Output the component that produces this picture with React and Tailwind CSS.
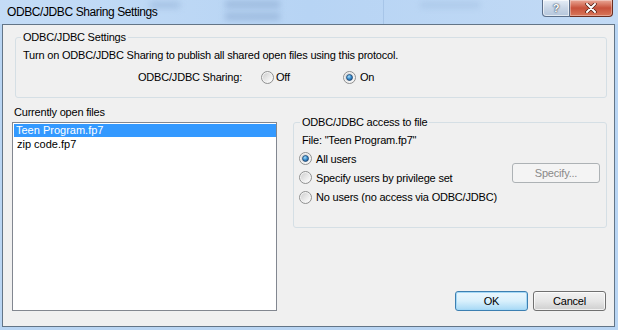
import React from "react";

function Radio({ checked }) {
  return (
    <svg width="13" height="13" viewBox="0 0 13 13" className="shrink-0">
      <defs>
        <linearGradient id="rbg" x1="0" y1="0" x2="1" y2="1">
          <stop offset="0" stopColor="#cfcfcf" />
          <stop offset="0.6" stopColor="#ececec" />
          <stop offset="1" stopColor="#ffffff" />
        </linearGradient>
        <radialGradient id="rdot" cx="0.4" cy="0.35" r="0.7">
          <stop offset="0" stopColor="#a9def9" />
          <stop offset="0.5" stopColor="#3f93d3" />
          <stop offset="1" stopColor="#19508b" />
        </radialGradient>
      </defs>
      <circle cx="6.5" cy="6.5" r="6" fill="#f4f4f4" stroke="#8e8f8f" strokeWidth="1" />
      <circle cx="6.5" cy="6.5" r="4.6" fill="url(#rbg)" />
      {checked && (
        <circle cx="6.5" cy="6.5" r="3" fill="url(#rdot)" stroke="#1b3f66" strokeWidth="0.7" />
      )}
    </svg>
  );
}

export default function App() {
  return (
    <div className="w-[618px] h-[330px] bg-[#b9d5f3] flex flex-col relative overflow-hidden font-['Liberation_Sans',Arial,sans-serif] text-black">
      {/* title bar */}
      <div className="h-[24px] shrink-0 relative flex items-center pl-[7px] bg-gradient-to-r from-[#c4dcf6] via-[#b7d4f4] to-[#c2daf5]">
        <div className="absolute left-[150px] top-[2px] w-[30px] h-[6px] bg-[#98b6da] blur-[3px] opacity-70" />
        <div className="absolute left-[225px] top-[1px] w-[55px] h-[7px] bg-[#90aed4] blur-[3px] opacity-70" />
        <div className="absolute left-[225px] top-[13px] w-[55px] h-[7px] bg-[#90aed4] blur-[3px] opacity-70" />
        <div className="absolute left-[383px] top-0 w-[1px] h-[24px] bg-[#a7c5e8]" />
        <div className="absolute left-[420px] top-[2px] w-[60px] h-[6px] bg-[#a3c0e2] blur-[3px] opacity-60" />
        <span className="relative text-[12px] tracking-[-0.4px] leading-[14px] text-black">ODBC/JDBC Sharing Settings</span>
        <div className="absolute top-0 right-[5px] flex">
          <div className="w-[28px] h-[17px] rounded-bl-[4px] border border-t-0 border-[#5b6f8a] bg-gradient-to-b from-[#e6eef7] via-[#c9d6e6] to-[#b4c6dc] flex items-center justify-center shadow-[inset_0_0_0_1px_rgba(255,255,255,0.6)]">
            <span className="text-[11px] font-bold leading-none text-white [text-shadow:0_0_2px_#2b3b52,0_0_1px_#2b3b52]">?</span>
          </div>
          <div className="w-[43px] h-[17px] rounded-br-[4px] border border-t-0 border-l-0 border-[#6b2d20] bg-gradient-to-b from-[#e9a897] via-[#c7513b] to-[#d8765a] flex items-center justify-center shadow-[inset_0_0_0_1px_rgba(255,255,255,0.35)]">
            <svg width="12" height="10" viewBox="0 0 12 10">
              <path d="M2 1 L10 9 M10 1 L2 9" stroke="#4a1b10" strokeWidth="3.4" strokeLinecap="round" />
              <path d="M2 1 L10 9 M10 1 L2 9" stroke="#ffffff" strokeWidth="2" strokeLinecap="round" />
            </svg>
          </div>
        </div>
      </div>

      {/* client */}
      <div className="flex-1 ml-[2px] mr-[3px] mb-[3px] border border-[#637587] bg-[#f0f0f0] flex flex-col text-[11px] tracking-[-0.2px] leading-[14px]">
        <fieldset className="ml-[12px] mt-[5px] w-[592px] border border-[#d5dfe5] rounded-[3px] pl-[7px] pt-[4px] pb-[13px]">
          <legend className="ml-[-2px] px-[2px] leading-[14px]">ODBC/JDBC Settings</legend>
          <div className="h-[14px]">Turn on ODBC/JDBC Sharing to publish all shared open files using this protocol.</div>
          <div className="mt-[8px] h-[14px] flex items-center">
            <div className="w-[219px] text-right">ODBC/JDBC Sharing:</div>
            <div className="ml-[19px] w-[82px] flex items-center">
              <Radio checked={false} />
              <span className="ml-[2px]">Off</span>
            </div>
            <div className="flex items-center">
              <Radio checked={true} />
              <span className="ml-[4px]">On</span>
            </div>
          </div>
        </fieldset>

        <div className="mt-[6px] flex">
          <div className="ml-[9px] w-[265px] flex flex-col">
            <div className="pl-[2px] h-[14px] mt-[1px]">Currently open files</div>
            <div className="mt-[3px] h-[189px] border border-[#828790] bg-white pt-[1px] pl-[1px] pr-0 tracking-normal">
              <div className="h-[13px] leading-[13px] bg-[#3399ff] text-white pl-[2px]">Teen Program.fp7</div>
              <div className="h-[13px] leading-[13px] pl-[3px] mt-[1px]">zip code.fp7</div>
            </div>
          </div>

          <div className="ml-[16px] w-[314px] flex flex-col">
            <fieldset className="mt-[11px] border border-[#d5dfe5] rounded-[3px] pl-[8px] pr-[6px] pt-[4px] pb-[20px]">
              <legend className="ml-[-2px] px-[2px] leading-[14px]">ODBC/JDBC access to file</legend>
              <div className="h-[14px]">File: "Teen Program.fp7"</div>
              <div className="mt-[2px] flex">
                <div className="ml-[-3px] flex flex-col">
                  <div className="h-[19px] flex items-center">
                    <Radio checked={true} />
                    <span className="ml-[4px]">All users</span>
                  </div>
                  <div className="h-[19px] flex items-center">
                    <Radio checked={false} />
                    <span className="ml-[4px]">Specify users by privilege set</span>
                  </div>
                  <div className="h-[20px] flex items-center">
                    <Radio checked={false} />
                    <span className="ml-[4px]">No users (no access via ODBC/JDBC)</span>
                  </div>
                </div>
                <div className="ml-auto mt-[14px] w-[88px] h-[20px] border border-[#adb2b5] rounded-[3px] bg-[#f4f4f4] text-[#8a8a8a] flex items-center justify-center">
                  Specify...
                </div>
              </div>
            </fieldset>

            <div className="mt-auto flex justify-end gap-[5px] mr-[1px]">
              <div className="w-[73px] h-[20px] rounded-[3px] border border-[#3c7fb1] bg-gradient-to-b from-[#eaf6fd] via-[#d9f0fc] to-[#a7d9f5] shadow-[inset_0_0_0_1px_#a4d8f6] flex items-center justify-center">
                OK
              </div>
              <div className="w-[73px] h-[20px] rounded-[3px] border border-[#707070] bg-gradient-to-b from-[#f2f2f2] via-[#e6e6e6] to-[#cfcfcf] shadow-[inset_0_0_0_1px_rgba(255,255,255,0.7)] flex items-center justify-center">
                Cancel
              </div>
            </div>
          </div>
        </div>
      </div>
    </div>
  );
}
